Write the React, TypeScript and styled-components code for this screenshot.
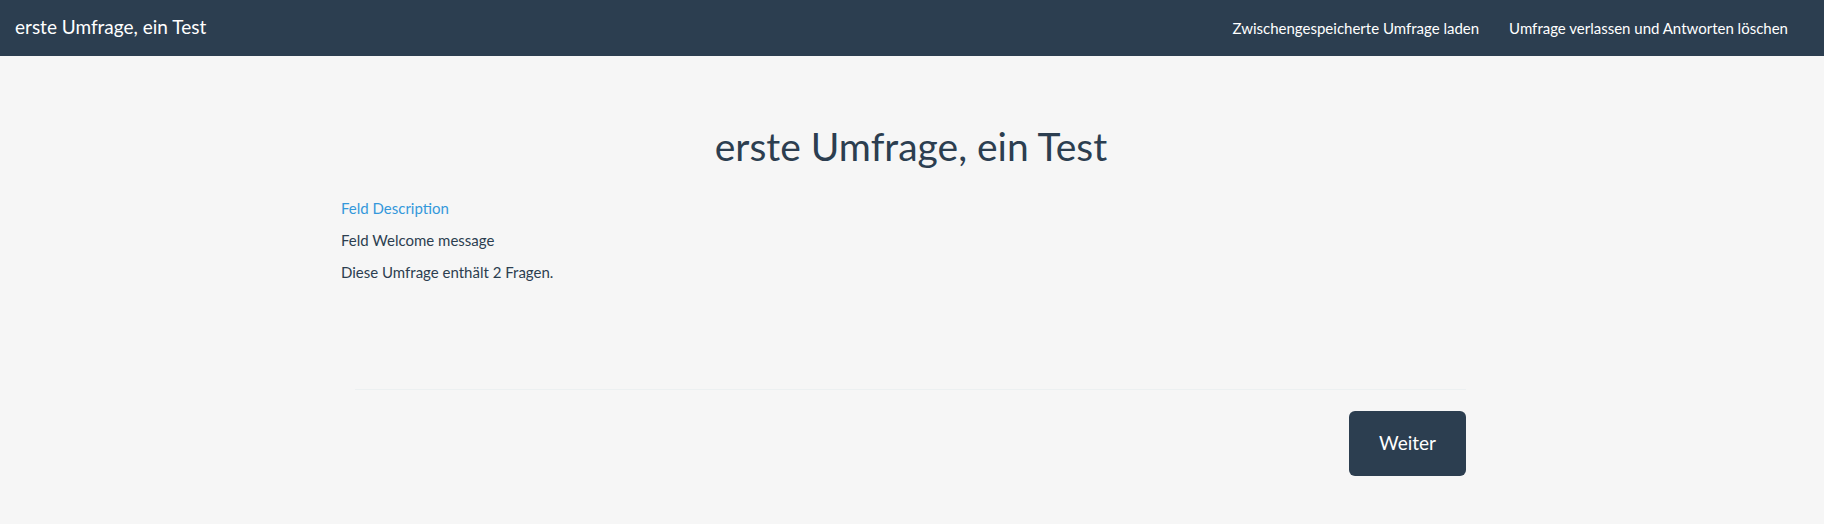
import * as React from 'react'
import styled, { createGlobalStyle } from 'styled-components'

const surveyTitle = 'erste Umfrage, ein Test'

const navLinks = [
  'Zwischengespeicherte Umfrage laden',
  'Umfrage verlassen und Antworten löschen'
]

export default () => (
  <>
    <GlobalStyle />
    <Navbar>
      <Brand href="#">{surveyTitle}</Brand>
      <NavRight>
        {navLinks.map(link => (
          <NavLink key={link} href="#">
            {link}
          </NavLink>
        ))}
      </NavRight>
    </Navbar>
    <Main>
      <Title>{surveyTitle}</Title>
      <Description href="#">Feld Description</Description>
      <Text>Feld Welcome message</Text>
      <Text>Diese Umfrage enthält 2 Fragen.</Text>
      <Footer>
        <Divider />
        <ButtonRow>
          <NextButton type="button">Weiter</NextButton>
        </ButtonRow>
      </Footer>
    </Main>
  </>
)

const GlobalStyle = createGlobalStyle`
  html, body {
    margin: 0;
    padding: 0;
    background: #f6f6f6;
    color: #2c3e50;
    font-family: Lato, "Open Sans", sans-serif;
    font-size: 15px;
    line-height: 1.42857;
  }
  * {
    box-sizing: border-box;
  }
`

const Navbar = styled.nav`
  display: flex;
  align-items: center;
  justify-content: space-between;
  height: 56px;
  background: #2c3e50;
  padding: 0 21px 0 15px;
`

const Brand = styled.a`
  font-size: 19px;
  line-height: 1;
  padding-bottom: 4px;
  color: #fff;
  text-decoration: none;
`

const NavRight = styled.div`
  display: flex;
  align-items: center;
`

const NavLink = styled.a`
  font-size: 15px;
  line-height: 1;
  padding: 0 15px;
  color: #fff;
  text-decoration: none;
`

const Main = styled.main`
  width: 1142px;
  margin: 0 auto;
  padding: 0 2px 35px 0;
`

const Title = styled.h1`
  margin: 69px 0 30px;
  font-size: 39px;
  font-weight: 400;
  line-height: 1.1;
  text-align: center;
`

const Description = styled.a`
  display: block;
  margin: 0 0 10.5px;
  color: #3498db;
  text-decoration: none;
`

const Text = styled.p`
  margin: 0 0 10.5px;
`

const Footer = styled.div`
  margin: 106px 15px 0 14px;
`

const Divider = styled.hr`
  margin: 0 0 21px;
  border: 0;
  border-top: 1px solid #ecf0f1;
`

const ButtonRow = styled.div`
  display: flex;
  justify-content: flex-end;
`

const NextButton = styled.button`
  height: 65px;
  padding: 0 30px;
  border: none;
  border-radius: 6px;
  background: #2c3e50;
  color: #fff;
  font-family: Lato, "Open Sans", sans-serif;
  font-size: 19px;
  line-height: 1.4;
  cursor: pointer;
`
